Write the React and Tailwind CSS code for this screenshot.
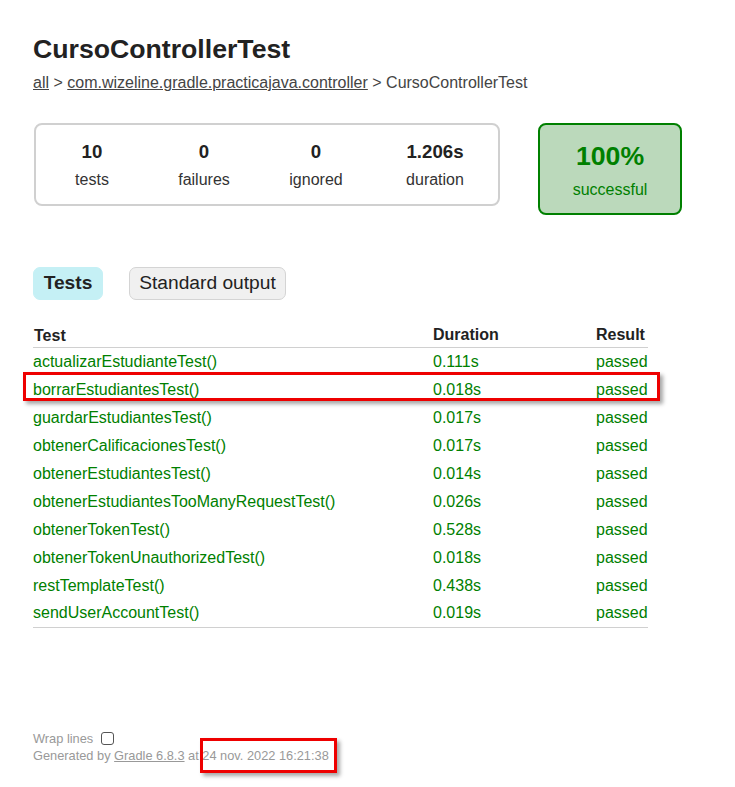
import React from "react";

const rows = [
  ["actualizarEstudianteTest()", "0.111s"],
  ["borrarEstudiantesTest()", "0.018s"],
  ["guardarEstudiantesTest()", "0.017s"],
  ["obtenerCalificacionesTest()", "0.017s"],
  ["obtenerEstudiantesTest()", "0.014s"],
  ["obtenerEstudiantesTooManyRequestTest()", "0.026s"],
  ["obtenerTokenTest()", "0.528s"],
  ["obtenerTokenUnauthorizedTest()", "0.018s"],
  ["restTemplateTest()", "0.438s"],
  ["sendUserAccountTest()", "0.019s"],
];

const counters = [
  ["10", "tests", "w-[112px]"],
  ["0", "failures", "w-[112px]"],
  ["0", "ignored", "w-[112px]"],
  ["1.206s", "duration", "w-[126px]"],
];

export default function App() {
  return (
    <div
      className="relative w-[735px] min-h-[787px] bg-white text-[#222] pl-[33px]"
      style={{ fontFamily: '"Liberation Sans", Arial, sans-serif' }}
    >
      <h1 className="pt-[33px] text-[26.67px] leading-[32px] font-bold text-[#222]">
        CursoControllerTest
      </h1>
      <div className="mt-[8px] text-[16px] leading-[20px] text-[#444]">
        <a className="underline">all</a> &gt;{" "}
        <a className="underline">com.wizeline.gradle.practicajava.controller</a> &gt; CursoControllerTest
      </div>

      <div className="mt-[30px] flex items-start">
        <div className="ml-px w-[466px] h-[83px] border-2 border-[#d0d0d0] rounded-[8px] flex">
          {counters.map(([n, l, w]) => (
            <div key={l} className={`${w} flex flex-col items-center pt-[15px]`}>
              <div className="text-[18.67px] leading-[24px] font-bold text-[#222]">{n}</div>
              <div className="mt-[6px] text-[16px] leading-[20px] text-[#333]">{l}</div>
            </div>
          ))}
        </div>
        <div className="ml-[38px] w-[144px] h-[92px] border-2 border-[#008000] bg-[#bbd9bb] rounded-[8px] flex flex-col items-center pt-[15px] text-[#008000]">
          <div className="text-[26.67px] leading-[32px] font-bold">100%</div>
          <div className="mt-[8px] text-[16px] leading-[20px]">successful</div>
        </div>
      </div>

      <div className="mt-[52px] flex">
        <div className="w-[70px] h-[33px] rounded-[7px] border border-[#c5f0f5] bg-[#c5f0f5] flex items-center justify-center text-[19.2px] font-bold text-[#222]">
          Tests
        </div>
        <div className="ml-[26px] w-[157px] h-[33px] rounded-[7px] border border-[#d4d4d4] bg-[#f0f0f0] flex items-center justify-center text-[19.2px] text-[#222]">
          Standard output
        </div>
      </div>

      <table className="mt-[23px] w-[615px] border-collapse text-[16px]">
        <thead>
          <tr className="border-b border-[#d0d0d0]">
            <th className="w-[400px] h-[21px] pl-px text-left font-bold leading-[21px] align-middle text-[#222]">Test</th>
            <th className="w-[163px] text-left font-bold text-[#222]">Duration</th>
            <th className="text-left font-bold text-[#222]">Result</th>
          </tr>
        </thead>
        <tbody className="text-[#008000]">
          {rows.map(([t, d], i) => (
            <tr key={t} className={i === rows.length - 1 ? "border-b border-[#d0d0d0]" : ""}>
              <td className="h-[28px] leading-[20px] align-middle">{t}</td>
              <td className="leading-[20px] align-middle">{d}</td>
              <td className="leading-[20px] align-middle">passed</td>
            </tr>
          ))}
        </tbody>
      </table>

      <div className="mt-[102px] text-[12.8px] leading-[17px] text-[#999]">
        <div className="flex items-center">
          <span>Wrap lines</span>
          <span className="ml-[8px] inline-block w-[13px] h-[13px] border border-[#555] rounded-[3px] bg-white" />
        </div>
        <div>
          Generated by <a className="underline">Gradle 6.8.3</a> at 24 nov. 2022 16:21:38
        </div>
      </div>

      <div className="absolute left-[23px] top-[372px] w-[637px] h-[29px] border-[3px] border-[#ee0000] shadow-[3px_3px_4px_rgba(0,0,0,0.35)] pointer-events-none" />
      <div className="absolute left-[200px] top-[738px] w-[137px] h-[35px] border-[3px] border-[#ee0000] shadow-[3px_3px_4px_rgba(0,0,0,0.35)] pointer-events-none" />
    </div>
  );
}
